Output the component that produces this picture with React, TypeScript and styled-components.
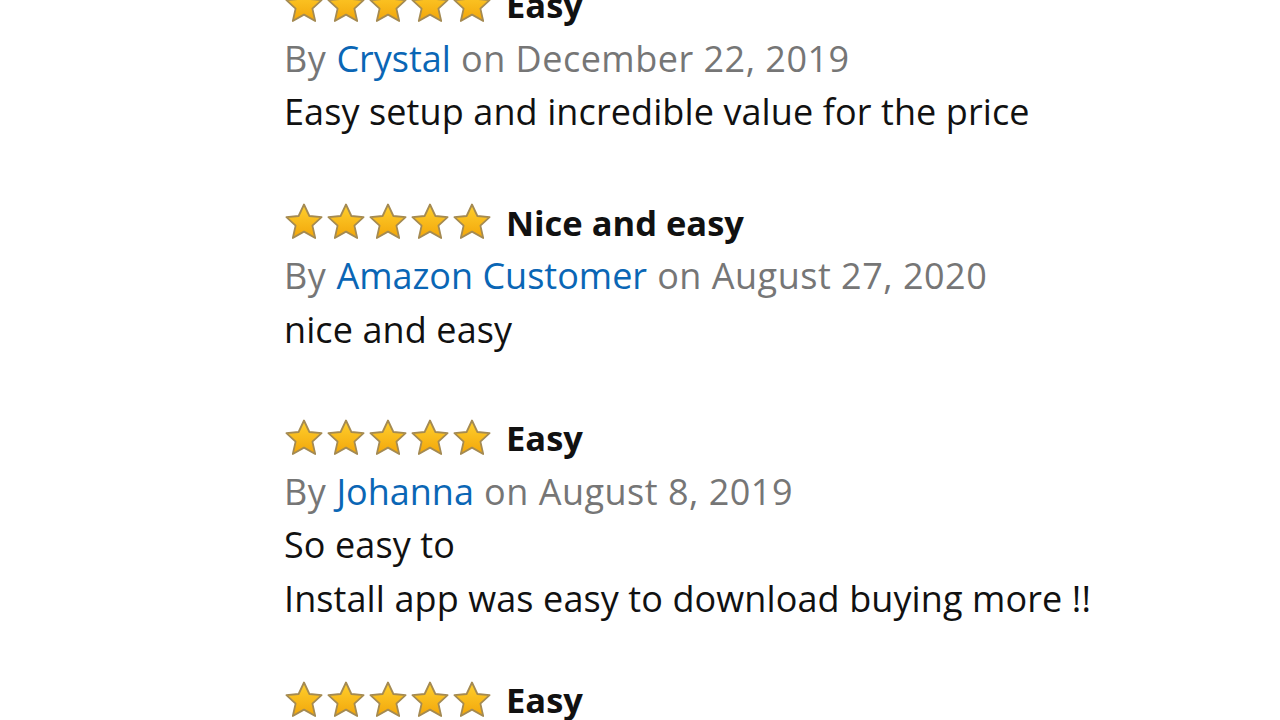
import React from "react";
import styled, { createGlobalStyle } from "styled-components";

const Global = createGlobalStyle`
  html, body { margin: 0; padding: 0; background: #ffffff; }
  body { font-family: "Open Sans", "Noto Sans", Arial, sans-serif; overflow: hidden; }
`;

const Page = styled.div`
  width: 1280px;
  height: 720px;
  overflow: hidden;
  box-sizing: border-box;
  padding: 0 0 0 284px;
`;

const List = styled.div`
  display: flex;
  flex-direction: column;
  margin-top: -22px;
`;

const Review = styled.div<{ $space: number }>`
  display: flex;
  flex-direction: column;
  margin-top: ${(p) => p.$space}px;
`;

const Line = styled.div`
  height: 53.5px;
  display: flex;
  align-items: center;
  font-size: 36px;
  white-space: nowrap;
`;

const Header = styled(Line)`
  gap: 14px;
`;

const Stars = styled.div`
  display: flex;
  gap: 2px;
`;

const Title = styled.span`
  font-weight: 700;
  font-size: 34.5px;
  color: #111111;
`;

const Meta = styled(Line)`
  color: #767676;
  letter-spacing: 0.5px;
`;

const Author = styled.span`
  color: #0a66b5;
  letter-spacing: 0;
  margin: 0 0.28em;
`;

const Body = styled(Line)`
  color: #111111;
  letter-spacing: 0.1px;
`;

const Star = () => (
  <svg width="40" height="40" viewBox="0 0 40 40">
    <defs>
      <linearGradient id="sg" x1="0" y1="0" x2="0" y2="1">
        <stop offset="0" stopColor="#ffd02e" />
        <stop offset="1" stopColor="#f2a60a" />
      </linearGradient>
    </defs>
    <path
      d="M20 2.5 L25.4 14 L37.6 15.2 L28.4 23.6 L31.2 36 L20 29.6 L8.8 36 L11.6 23.6 L2.4 15.2 L14.6 14 Z"
      fill="url(#sg)"
      stroke="#a48a52"
      strokeWidth="1.8"
      strokeLinejoin="round"
    />
  </svg>
);

type R = { title: string; author: string; date: string; body: string[]; space: number };

const reviews: R[] = [
  { title: "Easy", author: "Crystal", date: "December 22, 2019", body: ["Easy setup and incredible value for the price"], space: 0 },
  { title: "Nice and easy", author: "Amazon Customer", date: "August 27, 2020", body: ["nice and easy"], space: 57 },
  { title: "Easy", author: "Johanna", date: "August 8, 2019", body: ["So easy to", "Install app was easy to download buying more !!"], space: 55 },
  { title: "Easy", author: "Jane", date: "July 4, 2019", body: ["Easy"], space: 48 },
];

export default function App() {
  return (
    <Page>
      <Global />
      <List>
        {reviews.map((r, i) => (
          <Review key={i} $space={r.space}>
            <Header>
              <Stars>
                {[0, 1, 2, 3, 4].map((s) => (
                  <Star key={s} />
                ))}
              </Stars>
              <Title>{r.title}</Title>
            </Header>
            <Meta>
              By<Author>{r.author}</Author>on {r.date}
            </Meta>
            {r.body.map((b, j) => (
              <Body key={j}>{b}</Body>
            ))}
          </Review>
        ))}
      </List>
    </Page>
  );
}
